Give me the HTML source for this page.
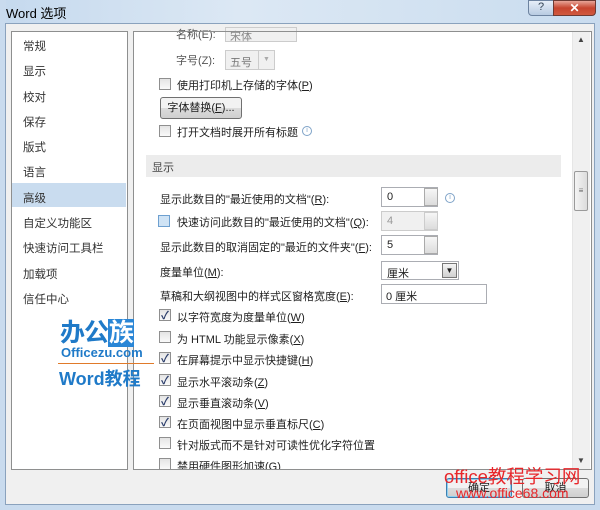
<!DOCTYPE html>
<html><head><meta charset="utf-8"><style>
*{margin:0;padding:0;box-sizing:border-box}
body{width:600px;height:510px;overflow:hidden;font-family:"Liberation Sans","Noto Sans CJK SC",sans-serif;font-size:11px;color:#1e1e1e;position:relative;background:#f0f0f0}
.a{position:absolute;white-space:nowrap}
.cb{position:absolute;width:12px;height:12px;border:1px solid #8f8f8f;background:linear-gradient(#e4e4e4,#fafafa)}
.ck::after{content:"✓";position:absolute;left:1px;top:-3px;font-size:11px;color:#2a3c6a;font-weight:bold}
.box{position:absolute;border:1px solid #abadb3;background:#fff}
.sp{position:absolute;width:14px;border:1px solid #aaa;background:linear-gradient(#f6f6f6,#dcdcdc)}
.btn{position:absolute;border:1px solid #707070;border-radius:3px;background:linear-gradient(#f2f2f2 50%,#dcdcdc 50%,#cfcfcf);text-align:center}
.info{position:absolute;width:10px;height:10px;border:1px solid #7fa3c8;border-radius:50%;font-size:7px;color:#7fa3c8;text-align:center;line-height:8px}
</style></head><body>
<div class="a" style="left:0;top:0;width:600px;height:24px;background:linear-gradient(90deg,#c5d9ee,#dce8f4 40%,#c9dcef)"></div>
<div class="a" style="left:0;top:0;width:6px;height:510px;background:#c9dbee"></div>
<div class="a" style="left:594px;top:0;width:6px;height:510px;background:#c9dbee"></div>
<div class="a" style="left:0;top:504px;width:600px;height:6px;background:#c9dbee"></div>
<div class="a" style="left:5px;top:23px;width:590px;height:482px;background:#f0f0f0;border:1px solid #8aa2bd"></div>
<div class="a" style="left:6px;top:3px;font-size:13px;color:#000">Word 选项</div>
<div class="a" style="left:528px;top:0;width:26px;height:16px;border:1px solid #6d83a0;border-radius:0 0 0 4px;background:linear-gradient(#e6eef8,#b8cbe2);text-align:center;font-size:11px;color:#345">?</div>
<div class="a" style="left:553px;top:0;width:43px;height:16px;border:1px solid #6d3a33;border-radius:0 0 4px 0;background:linear-gradient(#e8a597,#c7452f 50%,#d05a3f);text-align:center;font-size:12px;color:#fff;font-weight:bold;line-height:14px">✕</div>
<div class="a" style="left:11px;top:31px;width:117px;height:439px;background:#fff;border:1px solid #8e8f8f"></div>
<div class="a" style="left:12px;top:183px;width:114px;height:24px;background:#c9dcef"></div>
<div class="a" style="left:23px;top:35px;line-height:25.3px;font-size:11.5px;color:#333">常规<br>显示<br>校对<br>保存<br>版式<br>语言<br>高级<br>自定义功能区<br>快速访问工具栏<br>加载项<br>信任中心</div>
<div class="a" style="left:133px;top:31px;width:459px;height:439px;background:#fff;border:1px solid #8e8f8f;overflow:hidden">
 <div class="a" style="left:438px;top:0;width:18px;height:437px;background:#f0f0f0;border-left:1px solid #e6e6e6"></div>
 <div class="a" style="left:443px;top:3px;font-size:8px;color:#444">▲</div>
 <div class="a" style="left:443px;top:424px;font-size:8px;color:#444">▼</div>
 <div class="a" style="left:440px;top:139px;width:14px;height:40px;border:1px solid #9a9a9a;border-radius:2px;background:linear-gradient(90deg,#f4f4f4,#dcdcdc);font-size:8px;text-align:center;line-height:38px;color:#666">≡</div>
</div>
<div class="a" style="left:176px;top:26px;color:#555">名称(E):</div>
<div class="a" style="left:225px;top:27px;width:72px;height:15px;background:#f0f0f0;border:1px solid #ccc;color:#888;padding-left:4px">宋体</div>
<div class="a" style="left:133px;top:31px;width:440px;height:1px;background:#8e8f8f"></div>
<div class="a" style="left:176px;top:52px;color:#555">字号(Z):</div>
<div class="a" style="left:225px;top:50px;width:50px;height:20px;background:#f0f0f0;border:1px solid #ccc;color:#777;padding:3px 4px">五号</div>
<div class="a" style="left:258px;top:51px;width:16px;height:18px;border-left:1px solid #ccc;font-size:7px;color:#aaa;text-align:center;line-height:18px">▼</div>
<div class="cb" style="left:159px;top:78px"></div><div class="a" style="left:177px;top:77px">使用打印机上存储的字体(<u>P</u>)</div>
<div class="btn" style="left:160px;top:97px;width:82px;height:22px;line-height:20px">字体替换(<u>F</u>)...</div>
<div class="cb" style="left:159px;top:125px"></div><div class="a" style="left:177px;top:124px">打开文档时展开所有标题</div>
<div class="info" style="left:302px;top:126px">i</div>
<div class="a" style="left:146px;top:155px;width:415px;height:22px;background:#ececec;color:#444;padding:4px 6px">显示</div>
<div class="a" style="left:160px;top:191px">显示此数目的"最近使用的文档"(<u>R</u>):</div>
<div class="box" style="left:381px;top:187px;width:57px;height:20px;padding:3px 5px">0</div><div class="sp" style="left:424px;top:188px;height:18px"></div>
<div class="info" style="left:445px;top:193px">i</div>
<div class="a" style="left:158px;top:215px;width:12px;height:12px;border:1px solid #6ea0d0;background:#cfe3f5"></div>
<div class="a" style="left:177px;top:214px">快速访问此数目的"最近使用的文档"(<u>Q</u>):</div>
<div class="box" style="left:381px;top:211px;width:57px;height:20px;padding:3px 5px;background:#f0f0f0;color:#999;border-color:#ccc">4</div><div class="sp" style="left:424px;top:212px;height:18px;border-color:#ccc"></div>
<div class="a" style="left:160px;top:239px">显示此数目的取消固定的"最近的文件夹"(<u>F</u>):</div>
<div class="box" style="left:381px;top:235px;width:57px;height:20px;padding:3px 5px">5</div><div class="sp" style="left:424px;top:236px;height:18px"></div>
<div class="a" style="left:160px;top:264px">度量单位(<u>M</u>):</div>
<div class="box" style="left:381px;top:261px;width:78px;height:19px;padding:3px 5px">厘米</div>
<div class="a" style="left:442px;top:263px;width:15px;height:15px;border:1px solid #777;background:linear-gradient(#f4f4f4,#d0d0d0);font-size:8px;text-align:center;line-height:14px">▼</div>
<div class="a" style="left:160px;top:288px">草稿和大纲视图中的样式区窗格宽度(<u>E</u>):</div>
<div class="box" style="left:381px;top:284px;width:106px;height:20px;padding:3px 4px">0 厘米</div>
<div class="cb ck" style="left:159px;top:309px"></div><div class="a" style="left:177px;top:309px">以字符宽度为度量单位(<u>W</u>)</div>
<div class="cb" style="left:159px;top:331px"></div><div class="a" style="left:177px;top:331px">为 HTML 功能显示像素(<u>X</u>)</div>
<div class="cb ck" style="left:159px;top:352px"></div><div class="a" style="left:177px;top:352px">在屏幕提示中显示快捷键(<u>H</u>)</div>
<div class="cb ck" style="left:159px;top:374px"></div><div class="a" style="left:177px;top:374px">显示水平滚动条(<u>Z</u>)</div>
<div class="cb ck" style="left:159px;top:395px"></div><div class="a" style="left:177px;top:395px">显示垂直滚动条(<u>V</u>)</div>
<div class="cb ck" style="left:159px;top:416px"></div><div class="a" style="left:177px;top:416px">在页面视图中显示垂直标尺(<u>C</u>)</div>
<div class="cb" style="left:159px;top:437px"></div><div class="a" style="left:177px;top:437px">针对版式而不是针对可读性优化字符位置</div>
<div class="cb" style="left:159px;top:458px"></div><div class="a" style="left:177px;top:458px;height:11px;overflow:hidden">禁用硬件图形加速(G)</div>
<div class="a" style="left:60px;top:313px;font-size:25px;font-weight:bold;color:#1f7ac8;letter-spacing:-1px">办公<span style="background:#2a86d6;color:#fff;padding:0 1px">族</span></div>
<div class="a" style="left:61px;top:345px;font-size:13px;font-weight:bold;color:#1f7ac8">Officezu.com</div>
<div class="a" style="left:58px;top:363px;width:96px;height:1px;background:#e07a2a"></div>
<div class="a" style="left:59px;top:365px;font-size:18px;font-weight:bold;color:#1f7ac8">Word教程</div>
<div class="btn" style="left:446px;top:478px;width:66px;height:20px;border-color:#3c7fb1;box-shadow:inset 0 0 0 1px #8fd0f0;line-height:18px">确定</div>
<div class="btn" style="left:522px;top:478px;width:67px;height:20px;line-height:18px">取消</div>
<div class="a" style="left:444px;top:463px;font-size:18.5px;color:#e8262a">office教程学习网</div>
<div class="a" style="left:456px;top:485px;font-size:14px;color:#e8262a">www.office68.com</div>
</body></html>
